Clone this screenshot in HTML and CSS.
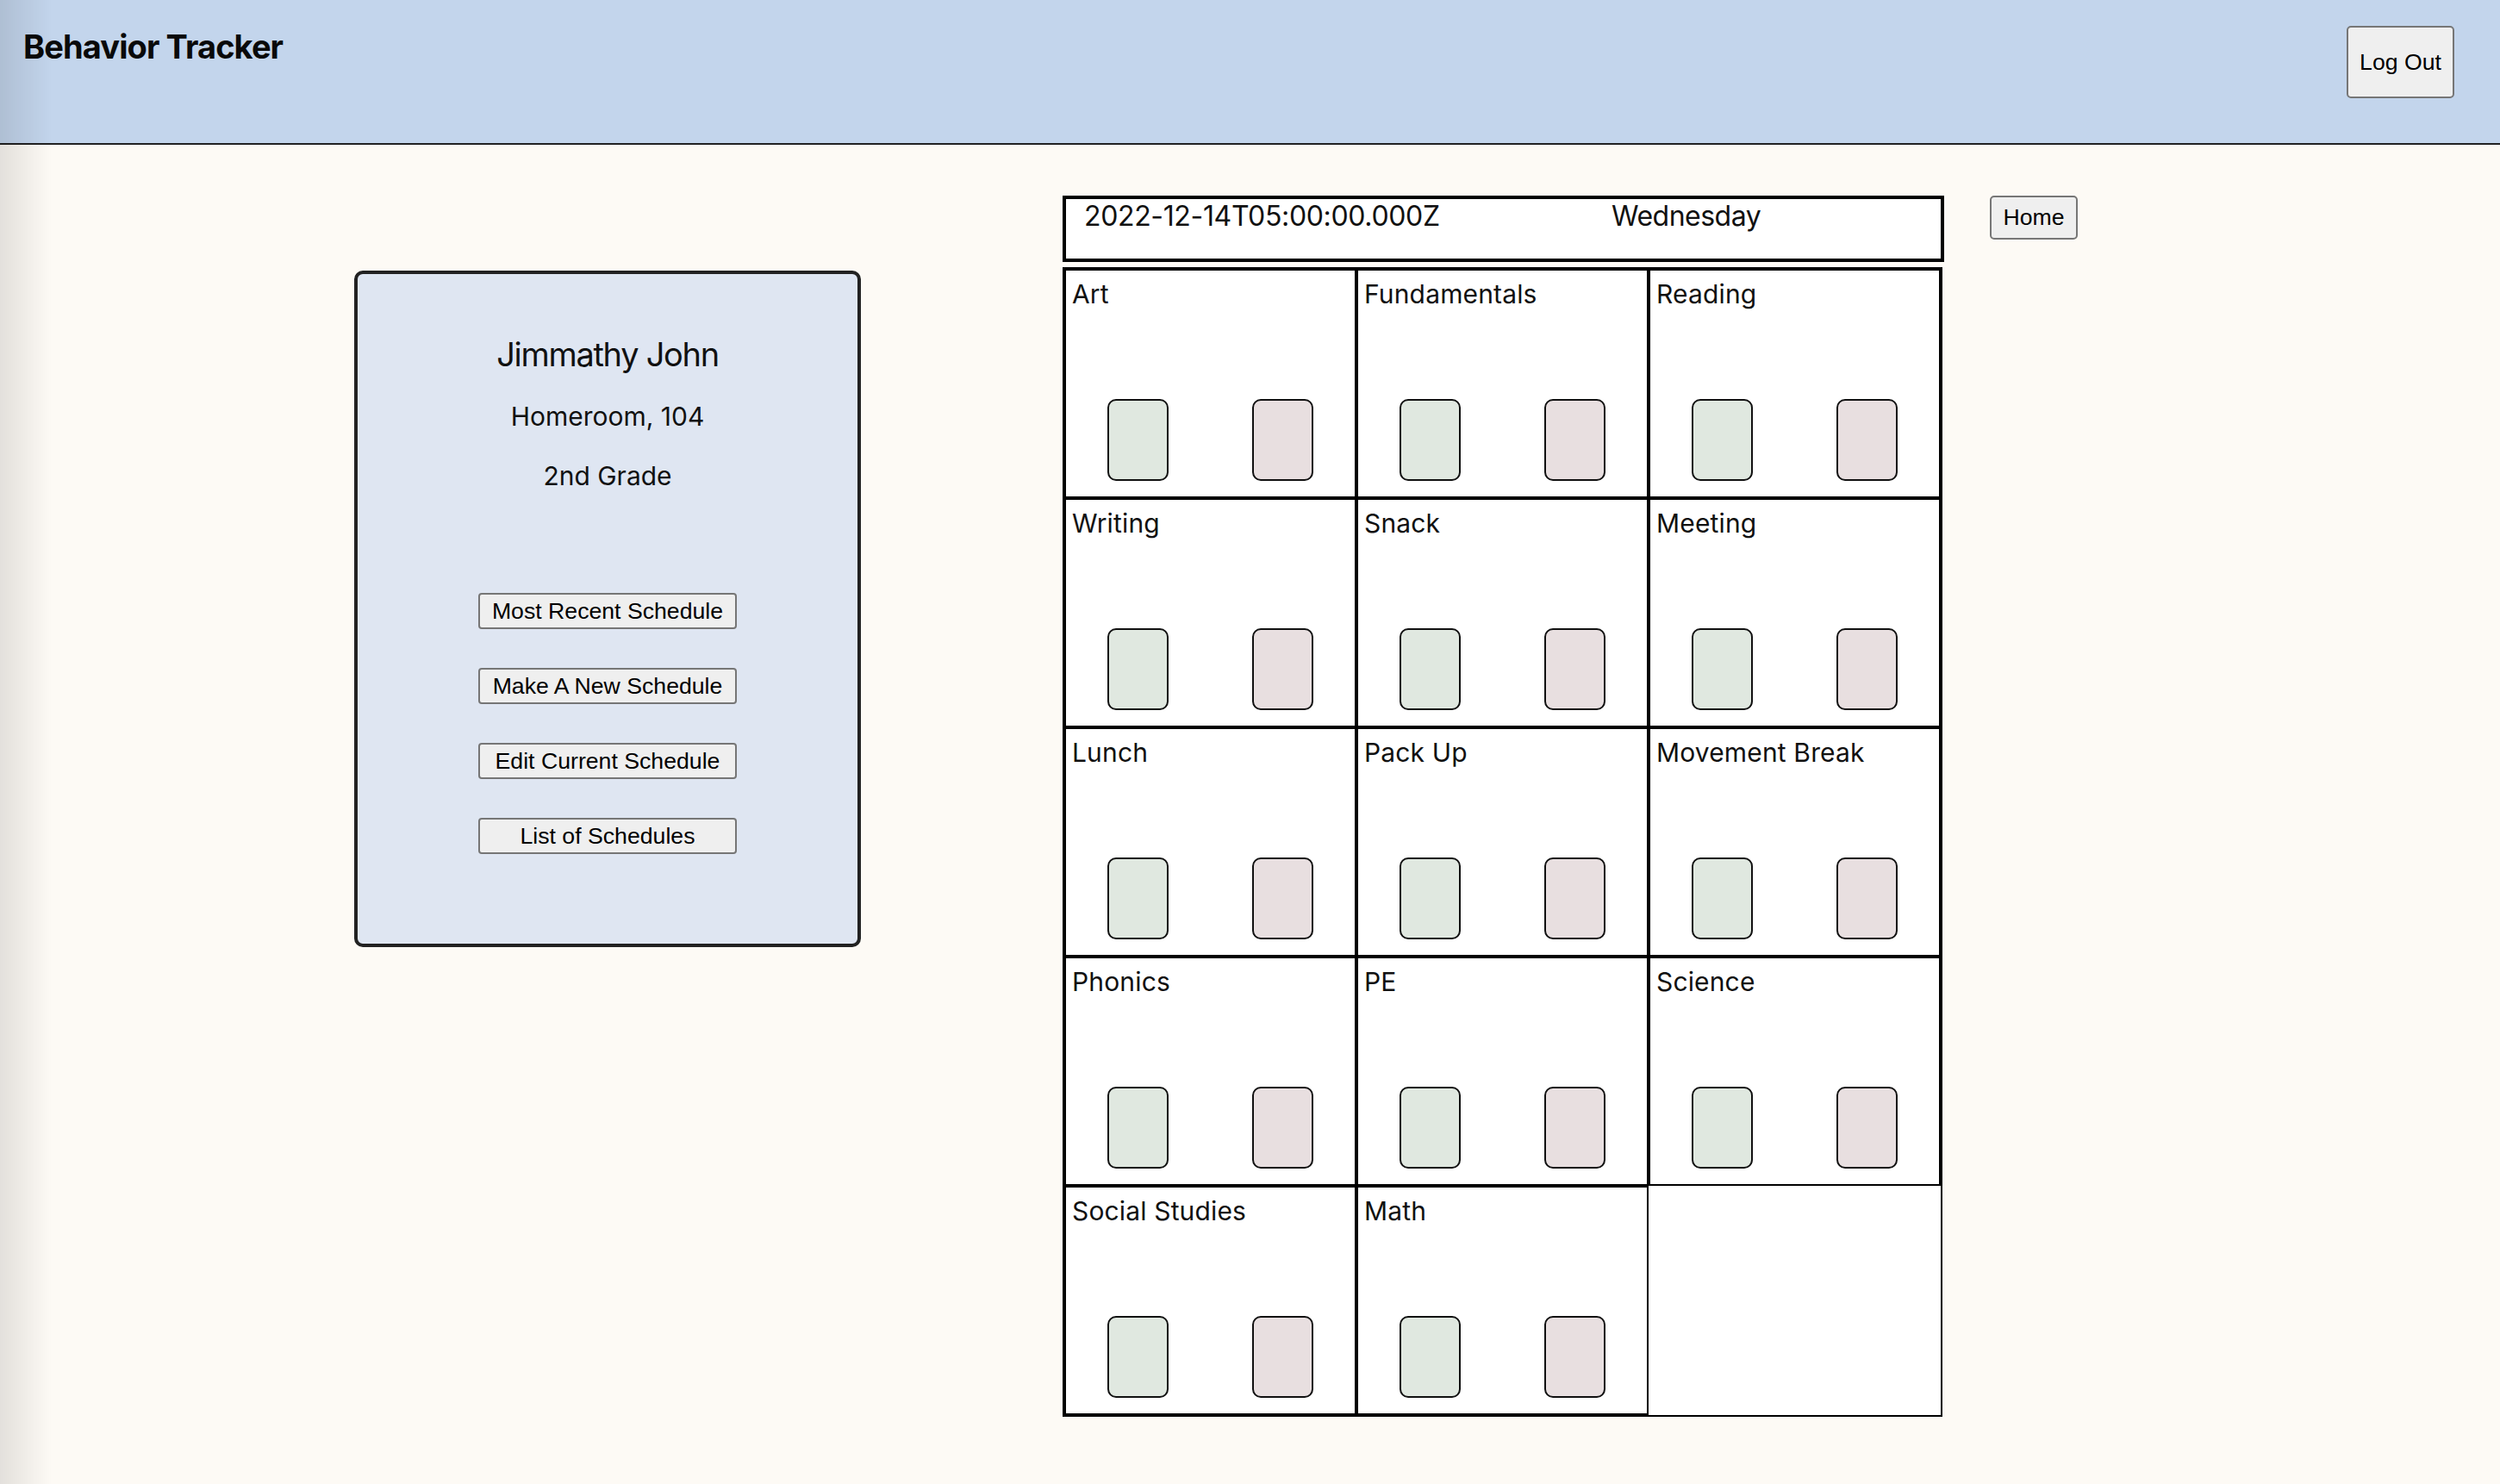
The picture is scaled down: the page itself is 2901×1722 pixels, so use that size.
FILE: index.html
```html
<!DOCTYPE html>
<html lang="en">
<head>
<meta charset="utf-8">
<title>Behavior Tracker</title>
<link rel="stylesheet" href="styles.css">
</head>
<body>
<header class="topbar">
  <h1 class="brand">Behavior Tracker</h1>
  <button class="btn btn-logout">Log Out</button>
</header>
<main class="page">
  <section class="student-card">
    <h2 class="student-name">Jimmathy John</h2>
    <p class="student-meta">Homeroom, 104</p>
    <p class="student-meta">2nd Grade</p>
    <div class="card-actions">
      <button class="btn btn-action">Most Recent Schedule</button>
      <button class="btn btn-action">Make A New Schedule</button>
      <button class="btn btn-action">Edit Current Schedule</button>
      <button class="btn btn-action">List of Schedules</button>
    </div>
  </section>
  <section class="schedule">
    <div class="date-bar">
      <span class="date-stamp">2022-12-14T05:00:00.000Z</span>
      <span class="weekday">Wednesday</span>
    </div>
    <div class="activity-grid">
      <div class="activity"><div class="activity-name">Art</div><div class="toggles"><span class="toggle toggle-good"></span><span class="toggle toggle-bad"></span></div></div>
      <div class="activity"><div class="activity-name">Fundamentals</div><div class="toggles"><span class="toggle toggle-good"></span><span class="toggle toggle-bad"></span></div></div>
      <div class="activity"><div class="activity-name">Reading</div><div class="toggles"><span class="toggle toggle-good"></span><span class="toggle toggle-bad"></span></div></div>
      <div class="activity"><div class="activity-name">Writing</div><div class="toggles"><span class="toggle toggle-good"></span><span class="toggle toggle-bad"></span></div></div>
      <div class="activity"><div class="activity-name">Snack</div><div class="toggles"><span class="toggle toggle-good"></span><span class="toggle toggle-bad"></span></div></div>
      <div class="activity"><div class="activity-name">Meeting</div><div class="toggles"><span class="toggle toggle-good"></span><span class="toggle toggle-bad"></span></div></div>
      <div class="activity"><div class="activity-name">Lunch</div><div class="toggles"><span class="toggle toggle-good"></span><span class="toggle toggle-bad"></span></div></div>
      <div class="activity"><div class="activity-name">Pack Up</div><div class="toggles"><span class="toggle toggle-good"></span><span class="toggle toggle-bad"></span></div></div>
      <div class="activity"><div class="activity-name">Movement Break</div><div class="toggles"><span class="toggle toggle-good"></span><span class="toggle toggle-bad"></span></div></div>
      <div class="activity"><div class="activity-name">Phonics</div><div class="toggles"><span class="toggle toggle-good"></span><span class="toggle toggle-bad"></span></div></div>
      <div class="activity"><div class="activity-name">PE</div><div class="toggles"><span class="toggle toggle-good"></span><span class="toggle toggle-bad"></span></div></div>
      <div class="activity"><div class="activity-name">Science</div><div class="toggles"><span class="toggle toggle-good"></span><span class="toggle toggle-bad"></span></div></div>
      <div class="activity"><div class="activity-name">Social Studies</div><div class="toggles"><span class="toggle toggle-good"></span><span class="toggle toggle-bad"></span></div></div>
      <div class="activity"><div class="activity-name">Math</div><div class="toggles"><span class="toggle toggle-good"></span><span class="toggle toggle-bad"></span></div></div>
    </div>
  </section>
  <button class="btn btn-home">Home</button>
</main>
</body>
</html>
```

FILE: styles.css
```css
* {
  box-sizing: border-box;
}

html {
  background: #fdfaf5;
}

body {
  margin: 0;
  min-height: 1722px;
  background: #fdfaf5;
  color: #111;
  font-family: Inter, "Noto Sans", sans-serif;
}

body::before {
  content: "";
  position: fixed;
  left: 0;
  top: 0;
  bottom: 0;
  width: 60px;
  background: linear-gradient(to right, rgba(0, 0, 0, 0.1), rgba(0, 0, 0, 0));
  pointer-events: none;
  z-index: 10;
}

.topbar {
  display: flex;
  justify-content: space-between;
  align-items: flex-start;
  height: 168px;
  padding: 30px 53px 0 27px;
  background: #c3d5ec;
  border-bottom: 2px solid #222;
}

.brand {
  margin: 1px 0 0;
  font-size: 38px;
  font-weight: 700;
  line-height: 46px;
  letter-spacing: -0.9px;
  color: #0a0a0a;
}

.btn {
  font-family: "Liberation Sans", Arial, sans-serif;
  font-size: 26.67px;
  color: #000;
  background: #efefef;
  border: 2px solid #767676;
  border-radius: 5px;
  padding: 0;
}

.btn-logout {
  width: 125px;
  height: 84px;
}

.page {
  display: flex;
  align-items: flex-start;
  padding-top: 59px;
}

.student-card {
  display: flex;
  flex-direction: column;
  align-items: center;
  width: 588px;
  height: 785px;
  margin: 87px 0 0 411px;
  padding-top: 70px;
  background: #dfe6f2;
  border: 4px solid #222;
  border-radius: 10px;
}

.student-name {
  margin: 0 0 30px;
  font-size: 38px;
  font-weight: 400;
  line-height: 47px;
  letter-spacing: -1.3px;
}

.student-meta {
  margin: 0 0 33px;
  font-size: 30px;
  line-height: 36px;
}

.card-actions {
  display: flex;
  flex-direction: column;
  gap: 45px;
  margin-top: 85px;
}

.btn-action {
  width: 300px;
  height: 42px;
  border-radius: 4px;
}

.schedule {
  display: flex;
  flex-direction: column;
  margin-left: 234px;
}

.date-bar {
  display: flex;
  width: 1023px;
  height: 77px;
  padding-left: 21px;
  background: #fff;
  border: 4px solid #000;
  font-size: 32px;
  line-height: 40px;
}

.date-stamp {
  width: 612px;
  letter-spacing: -0.35px;
}

.weekday {
  letter-spacing: -0.5px;
}

.activity-grid {
  display: grid;
  grid-template-columns: repeat(3, 339px);
  grid-auto-rows: 266px;
  width: 1021px;
  margin-top: 6px;
  background: #fff;
  border: 2px solid #000;
}

.activity {
  display: flex;
  flex-direction: column;
  border: 2px solid #000;
}

.activity-name {
  margin-top: 9px;
  padding-left: 7px;
  font-size: 30px;
  line-height: 36px;
  letter-spacing: 0.15px;
}

.toggles {
  display: flex;
  justify-content: space-around;
  margin-top: auto;
  margin-bottom: 18px;
}

.toggle {
  width: 71px;
  height: 95px;
  border: 2px solid #111;
  border-radius: 10px;
}

.toggle-good {
  background: #e0e8e0;
}

.toggle-bad {
  background: #e8dfe0;
}

.btn-home {
  width: 102px;
  height: 51px;
  margin-left: 53px;
}
```
